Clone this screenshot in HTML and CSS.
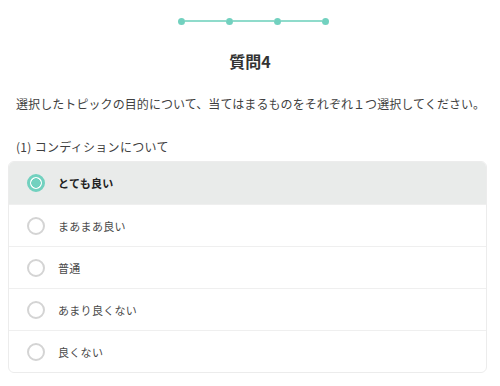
FILE: index.html
```html
<!DOCTYPE html>
<html lang="ja">
<head>
  <meta charset="UTF-8" />
  <meta name="viewport" content="width=device-width, initial-scale=1.0"/>
  <title>質問4</title>
  <link rel="stylesheet" href="styles.css">
</head>
<body>

  <!-- Progress -->
  <div class="steps">
    <span class="dot"></span>
    <span class="line"></span>
    <span class="dot"></span>
    <span class="line"></span>
    <span class="dot"></span>
    <span class="line"></span>
    <span class="dot"></span>
  </div>

  <h2 class="title">質問4</h2>

  <p class="lead">選択したトピックの目的について、当てはまるものをそれぞれ１つ選択してください。</p>

  <div class="sub">(1) コンディションについて</div>

  <div class="options">
    <label class="option selected"><span class="radio"></span>とても良い</label>
    <label class="option"><span class="radio"></span>まあまあ良い</label>
    <label class="option"><span class="radio"></span>普通</label>
    <label class="option"><span class="radio"></span>あまり良くない</label>
    <label class="option"><span class="radio"></span>良くない</label>
  </div>

</body>
</html>
```

FILE: styles.css
```css
* { box-sizing: border-box; }
body {
  margin: 0;
  background-color: #fff;
  color: #333;
  font-family: "Noto Sans CJK JP", "Noto Sans", sans-serif;
}

/* progress dots */
.steps {
  display: flex;
  align-items: center;
  justify-content: center;
  padding-top: 17px;
  height: 25px;
  margin-left: 6px;
}

.dot {
  width: 7px;
  height: 7px;
  border-radius: 50%;
  background-color: #72d1bf;
}

.line {
  width: 41px;
  height: 2px;
  background-color: #8fdbcb;
}

.title {
  margin: 25px 0 0;
  text-align: center;
  font-size: 16px;
  font-weight: bold;
  line-height: 22px;
  color: #333;
}

.lead {
  margin: 22px 0 0;
  padding: 0 8px 0 16px;
  font-size: 12px;
  line-height: 20px;
  letter-spacing: 0.08px;
  white-space: nowrap;
  color: #3f3f3f;
}

.sub {
  margin-top: 23px;
  padding: 0 16px;
  font-size: 12px;
  line-height: 20px;
  letter-spacing: 0.3px;
  color: #3f3f3f;
}

.options {
  margin: 4px 13px 0 8px;
  border: 1px solid #ececec;
  border-radius: 6px;
  overflow: hidden;
}

.option {
  display: flex;
  align-items: center;
  height: 42px;
  padding-left: 18px;
  font-size: 11px;
  letter-spacing: 0.3px;
  color: #4a4a4a;
  border-top: 1px solid #efefef;
  cursor: pointer;
}

.option:first-child { border-top: none; }

.option.selected {
  background-color: #e9ebea;
  font-weight: bold;
  color: #222;
}

.radio {
  width: 18px;
  height: 18px;
  border-radius: 50%;
  border: 2px solid #d4d4d4;
  background-color: #fff;
  margin-right: 13px;
}

.option.selected .radio {
  border: 3px solid #72d1bf;
  background: radial-gradient(circle, #72d1bf 0 4.5px, #fff 5px);
}
```
